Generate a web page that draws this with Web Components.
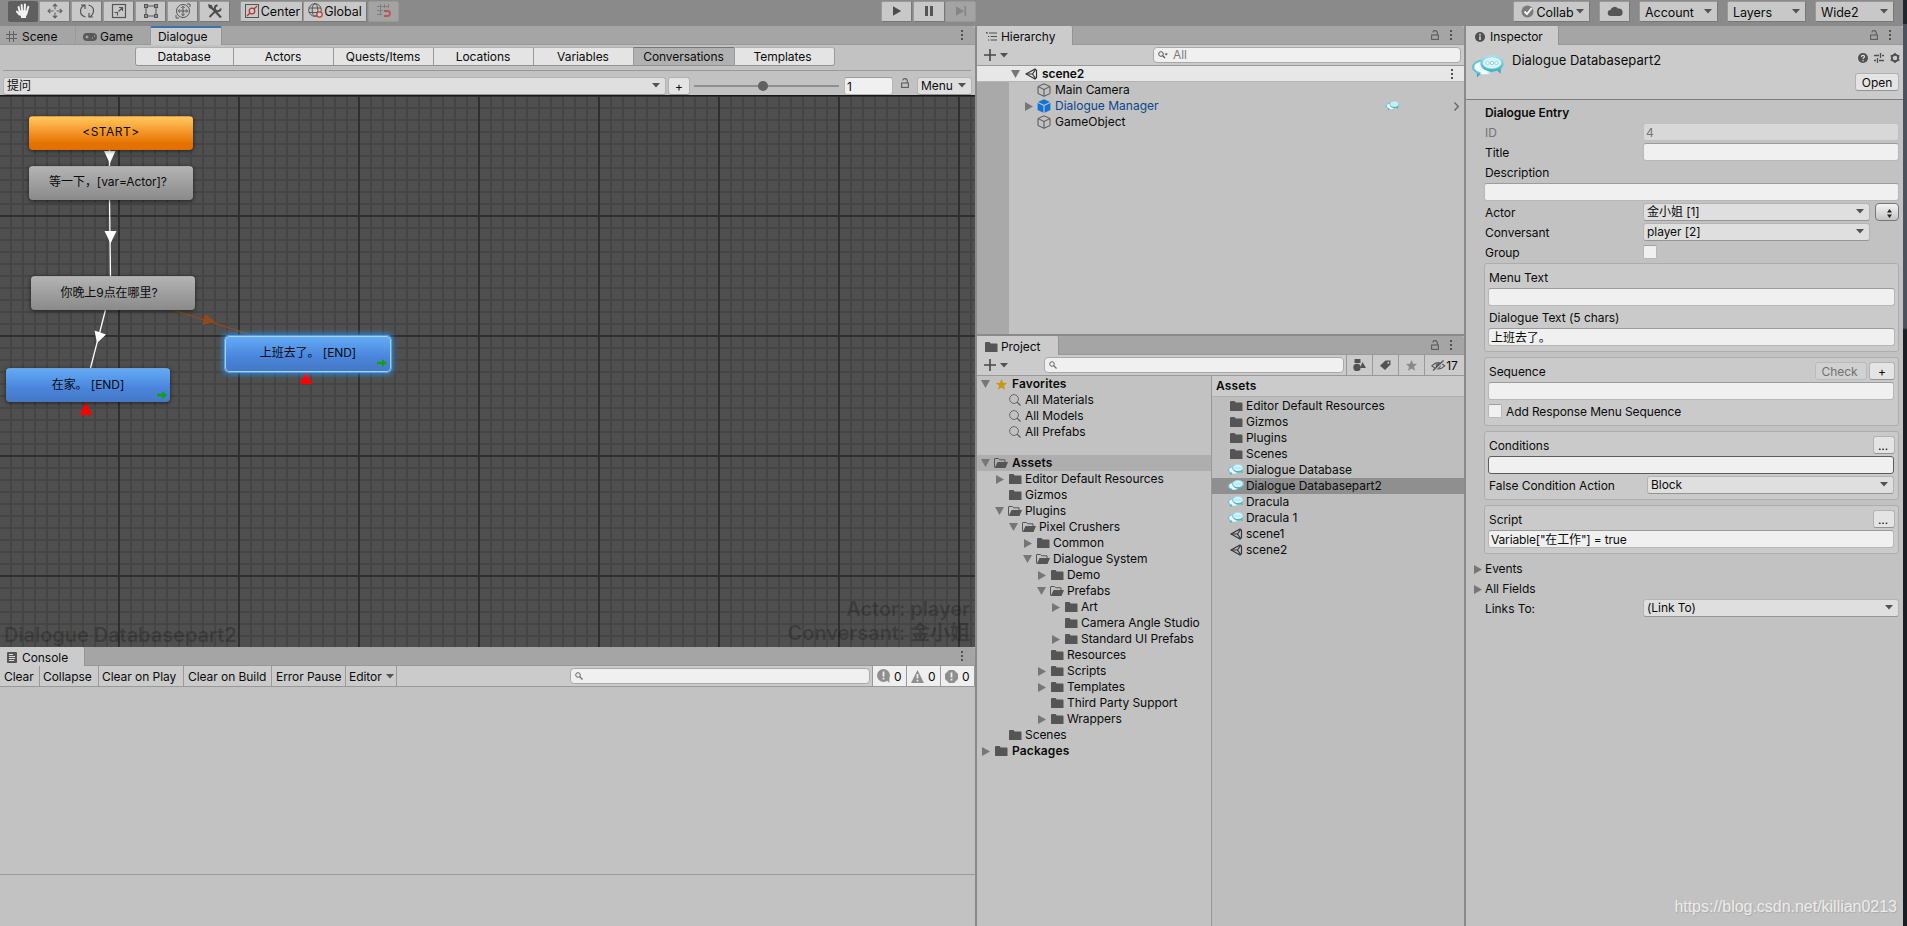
<!DOCTYPE html>
<html lang="zh">
<head>
<meta charset="utf-8">
<title>Unity Editor</title>
<style>
html,body{margin:0;height:100%}
body{font:12px/16px Inter,"Noto Sans CJK SC",sans-serif;color:#0b0b0b;background:#8a8a8a;overflow:hidden;letter-spacing:-.06px}
</style>
</head>
<body>
<editor-app></editor-app>
<script>
const define = (name, css, html) => {
  const t = document.createElement('template');
  customElements.define(name, class extends HTMLElement {
    constructor() {
      super();
      this.attachShadow({mode: 'open'});
    }
    connectedCallback() {
      if (this.shadowRoot.childNodes.length) return;
      t.innerHTML = `<style>*{box-sizing:border-box}:host{display:block;box-sizing:border-box;white-space:nowrap}${css}</style>` +
        (typeof html === 'function' ? html(this) : html);
      this.shadowRoot.append(t.content.cloneNode(true));
    }
  });
};

/* ---------- icons ---------- */
const chat = (id) => `<defs><linearGradient id="${id}" x1="0" y1="0" x2="0" y2="1"><stop offset="0" stop-color="#a6e6f0"/><stop offset="1" stop-color="#3fb0c3"/></linearGradient></defs>
<path d="M4.500 15 5 22.500 9.500 18zM24 14l4.500 5 .5-7z" fill="#3cabbf"/>
<ellipse cx="11.500" cy="12" rx="11.500" ry="7.500" fill="#62c5d5"/><ellipse cx="11.500" cy="12" rx="9.300" ry="5.500" fill="#f4fdfe"/>
<ellipse cx="20" cy="8.500" rx="11.700" ry="8.300" fill="url(#${id})"/><ellipse cx="20" cy="8" rx="9.300" ry="5.800" fill="#d9f4f8"/>
<path d="M9 13q3.500 5 10.500 4.500-5 3-11 1.500z" fill="#f4fdfe"/>
<g fill="#fff" stroke="#86d0dc" stroke-width=".9"><circle cx="15.500" cy="8" r="1.700"/><circle cx="20" cy="8" r="1.700"/><circle cx="24.500" cy="8" r="1.700"/></g>`;
const ICONS = {
  hand: [16,16,'<g stroke="#f2f2f2" stroke-width="2" stroke-linecap="round" fill="none"><path d="M4.6 8.6 3.6 4M7 7.5 6.6 2M9.6 7.5 10 1.6M12 8.5l1.3-4.7M4.5 11.5 1.9 8.6"/></g><path d="M3.8 8Q8 6.5 12.9 8q.1 3.5-1.9 5.5V15H6v-1.5Q3.8 11.8 3.8 8z" fill="#f2f2f2"/>'],
  move: [16,16,'<g fill="none" stroke="#606060" stroke-width="1.1"><path d="M8 1v5.500M8 9.500v5.500M1 8h5.500M9.500 8H15M5.800 3.300 8 1l2.200 2.300M5.800 12.700 8 15l2.200-2.300M3.300 5.800 1 8l2.300 2.200M12.700 5.800 15 8l-2.300 2.200"/></g>'],
  rotate: [16,16,'<g fill="none" stroke="#555" stroke-width="1.200"><path d="M6.500 14Q1.200 12.500 1.500 8 1.700 3.900 5.500 2.200M2 2h4v4M9.500 2q5.300 1.500 5 6-.2 4.100-4 5.800M14 14h-4v-4"/></g>'],
  scale: [16,16,'<g fill="none" stroke="#555" stroke-width="1.200"><rect x="1.500" y="1.500" width="13" height="13"/><path d="M8 4.500h3.500V8M11.500 4.500 7.500 8.500M3.500 9.500h3v3"/></g>'],
  rect: [16,16,'<g fill="#555"><path d="M3 3h10v10H3z" fill="none" stroke="#555"/><path d="M1 1h4v4H1zM11 1h4v4h-4zM1 11h4v4H1zM11 11h4v4h-4z"/></g><path d="M2.300 2.300h1.500v1.500H2.300zM12.300 2.300h1.500v1.500h-1.500zM2.300 12.300h1.500v1.500H2.300zM12.300 12.300h1.500v1.500h-1.500z" fill="#c8c8c8"/>'],
  multi: [16,16,'<g fill="none" stroke="#555"><circle cx="8" cy="8" r="6.500"/><path d="M8 3.500v9M3.500 8h9M6.300 5 8 3.300 9.700 5M6.300 11 8 12.700 9.700 11M5 6.300 3.300 8 5 9.700M11 6.300 12.700 8 11 9.700M12 1h3v3M4 15H1v-3" /></g>'],
  tools: [16,16,'<g fill="none" stroke="#4c4c4c" stroke-width="2.200"><path d="M5 5l9 9.500" /><path d="M2.500 14 9 7.500M13.800 5.500a3 3 0 1 1-3.300-3.300" stroke-width="1.900"/></g><path d="M1 1l4 1.200.9 3.100L4.500 6.300 1.800 4.800z" fill="#4c4c4c"/>'],
  center: [14,14,'<rect x=".5" y=".5" width="13" height="13" fill="none" stroke="#555"/><g stroke="#b23232" fill="none" stroke-width="1.200"><circle cx="7" cy="7" r="2.800"/><path d="M9 5l3-3M5 9l-3 3"/></g>'],
  globe: [16,16,'<g fill="none" stroke="#555"><circle cx="7" cy="7" r="6.300"/><ellipse cx="7" cy="7" rx="2.800" ry="6.300"/><path d="M1 5h12M1 9.500h9"/></g><circle cx="11.500" cy="11.500" r="2.700" fill="#d8d0d0" stroke="#c33" stroke-width="1.200"/>'],
  snap: [16,16,'<path d="M4.500 1v11M8.500 1v4M12.500 1v4M1 3.500h12M1 7.500h6M1 11.500h5" stroke="#808080" fill="none"/><path d="M8 8h3.500a2.500 2.500 0 0 1 0 5H8" fill="none" stroke="#bb5555" stroke-width="1.800"/>'],
  play: [16,16,'<path d="M4 3.200v9.600L12.200 8z" fill="#4c4c4c"/>'],
  pause: [16,16,'<path d="M4 3h3v10H4zM9 3h3v10H9z" fill="#555"/>'],
  step: [16,16,'<path d="M3 3.200v9.600L11 8zM11.500 3.200h1.600v9.600h-1.600z" fill="#858585"/>'],
  check: [13,13,'<circle cx="6.500" cy="6.500" r="6" fill="#7b7b7b"/><path d="M3.500 6.500 6 9l4.800-6" stroke="#f5f5f5" stroke-width="2" fill="none"/>'],
  cloud: [16,12,'<path d="M4 11a3 3 0 0 1-.5-6A4.300 4.300 0 0 1 11 3.500 3.700 3.700 0 0 1 12.500 11z" fill="#555"/>'],
  down: [8,5,'<path d="M0 0h8L4 4.600z" fill="#525252"/>'],
  foldd: [9,8,'<path d="M0 0h9L4.500 8z" fill="#767676"/>'],
  foldr: [8,9,'<path d="M0 0v9l8-4.500z" fill="#767676"/>'],
  grid: [11,11,'<path d="M3.500 0v11M7.500 0v11M0 3.500h11M0 7.500h11" stroke="#606060" fill="none"/>'],
  pad: [14,8,'<rect width="14" height="8" rx="4" fill="#595959"/><path d="M2.500 4h3M4 2.500v3M9 5h1M11 3h1" stroke="#bbb" fill="none"/>'],
  list: [11,9,'<path d="M3 1h8M4.500 4.500H11M4.500 8H11" stroke="#505050" stroke-width="1.100"/><path d="M0 .5h1.500M2 4.500h1.200M2 8h1.200M1 1v1" stroke="#505050"/>'],
  lock: [8,10,'<rect x=".6" y="5" width="6.800" height="4.400" fill="none" stroke="#5c5c5c" stroke-width="1.100"/><path d="M6.300 5V2.600Q6 .6 4 .6T1.800 2.400" fill="none" stroke="#5c5c5c" stroke-width="1.100"/>'],
  dots: [2,10,'<path d="M0 0h2v2H0zM0 4h2v2H0zM0 8h2v2H0z" fill="#525252"/>'],
  plus: [12,12,'<path d="M6 0v12M0 6h12" stroke="#484848" stroke-width="1.600"/>'],
  find: [8,8,'<circle cx="3" cy="3" r="2.300" fill="none" stroke="#666"/><path d="M4.700 4.700 7.500 7.500" stroke="#666" stroke-width="1.200"/>'],
  finda: [10,8,'<circle cx="3" cy="3" r="2.300" fill="none" stroke="#555"/><path d="M4.700 4.700 7 7" stroke="#555" stroke-width="1.300"/><path d="M6.500 2.500H10L8.200 4.500z" fill="#555"/>'],
  mag: [12,12,'<circle cx="5" cy="5" r="4.400" fill="none" stroke="#666"/><path d="M8.300 8.300 11.500 11.500" stroke="#666" stroke-width="1.400"/>'],
  scene: [13,12,'<g fill="none" stroke="#333" stroke-width="1.200"><path d="M1 6 10 .9l1.500 1.600v7L10 11.100z"/><path d="M1 6h6.500M7.500 6l3-4.500M7.500 6l3 4.500"/></g>'],
  cube: [14,14,'<g fill="none" stroke="#555" stroke-width="1"><path d="M7 .8 13 3.500v7L7 13.300 1 10.500v-7zM1 3.500l6 3 6-3M7 6.500v6.800"/></g>'],
  prefab: [14,14,'<path d="M7 .3 13 3 7 5.700 1 3zM.6 4l5.800 2.700v7L.6 11zM13.400 4 7.600 6.700v7l5.800-2.700z" fill="#1173d8"/>'],
  chev: [5,9,'<path d="M.5.500 4.300 4.500.500 8.500" fill="none" stroke="#666" stroke-width="1.300"/>'],
  chat: [32,23,chat('g')],
  folder: [13,10,'<path d="M0 1Q0 0 1 0h3.500l1.300 1.500H11.500q1 0 1 1V10H0z" fill="#555"/>'],
  open: [14,10,'<path d="M.5 9.500V1Q.5.500 1 .500h3.500l1.200 1.300H11V4" fill="none" stroke="#555"/><path d="M3.500 4H14l-2.500 6H.8z" fill="#555"/>'],
  star: [11,11,'<path d="M5.500 0l1.600 3.800 3.900.3-3 2.600 1 4.100-3.500-2.200L2 10.800l1-4.100L0 4.100l3.900-.3z" fill="#c8980f"/>'],
  star2: [11,11,'<path d="M5.500 0l1.600 3.800 3.900.3-3 2.600 1 4.100-3.500-2.200L2 10.800l1-4.100L0 4.100l3.900-.3z" fill="#8a8a8a"/>'],
  shapes: [13,12,'<path d="M1.500 0h6v4h-6zM9.500 3l3.500 6H7z" fill="#525252"/><circle cx="4" cy="8.500" r="3.700" fill="#525252"/>'],
  tag: [11,10,'<path d="M5.500.500H10.500V4.500L5 10 0 5.800z" fill="#525252"/><circle cx="8.300" cy="2.700" r="1" fill="#ccc"/>'],
  eye: [15,11,'<path d="M.8 5.800Q7.300-.5 13.800 5.800 7.300 12 .8 5.800z" fill="none" stroke="#555" stroke-width="1.100"/><circle cx="7.300" cy="5.500" r="2.600" fill="#666"/><path d="M2.800 11 13.300 1" stroke="#cbcbcb" stroke-width="1.500"/><path d="M2 10.500 12.500.500" stroke="#555" stroke-width="1.300"/>'],
  lines: [10,11,'<rect width="10" height="11" rx="1" fill="#555"/><path d="M2 2.500h4M2 4.500h6M2 6.500h6M2 8.500h5" stroke="#ddd" fill="none"/>'],
  info: [10,10,'<circle cx="5" cy="5" r="5" fill="#505050"/><path d="M5 1.800v1.600M5 4.300V8" stroke="#ddd" stroke-width="1.500"/>'],
  log: [13,14,'<circle cx="6.500" cy="6.500" r="6.500" fill="#8f8f8f"/><path d="M8 9h4.300v5z" fill="#8f8f8f"/><path d="M6.500 2.500v5M6.500 8.700v1.800" stroke="#eee" stroke-width="1.800"/>'],
  warn: [13,13,'<path d="M6.500 0 13 13H0z" fill="#8f8f8f"/><path d="M6.500 4v4.500M6.500 9.800v1.700" stroke="#eee" stroke-width="1.700"/>'],
  err: [13,13,'<path d="M4 0h5l4 4v5l-4 4H4L0 9V4z" fill="#8f8f8f"/><path d="M6.500 2.500v5M6.500 8.700v1.800" stroke="#eee" stroke-width="1.800"/>'],
  help: [10,10,'<circle cx="5" cy="5" r="5" fill="#505050"/><path d="M3.400 3.900Q3.500 2.300 5 2.300T6.500 3.700Q6.400 4.600 5.400 5L5 6M5 7v1.200" fill="none" stroke="#e0e0e0" stroke-width="1.200"/>'],
  presets: [10,10,'<path d="M0 2.500h5M8 2.500h2M6.500 0v5M0 7.500h2M5 7.500h5M3.500 5v5" stroke="#505050" stroke-width="1.300"/>'],
  gear: [10,10,'<circle cx="5" cy="5" r="3.200" fill="none" stroke="#505050" stroke-width="1.900"/><path d="M5 0v1.500M5 8.500V10M.7 2.500 2 3.300M8 6.700l1.300.8M.7 7.500 2 6.700M8 3.300l1.300-.8" stroke="#505050" stroke-width="1.600"/>'],
  updown: [5,9,'<path d="M0 3.500h5L2.500 0zM0 5.500h5L2.500 9z" fill="#222"/>'],
  arrow: [10,8,'<path d="M0 2.800h5V0l5 4-5 4V5.200H0z" fill="#10a010"/>'],
};
define('ui-icon', ':host{flex:none;display:block}svg{display:block}', el => {
  const [w, h, body] = ICONS[el.getAttribute('name')];
  const s = +(el.getAttribute('scale') || 1);
  return `<svg width="${w*s}" height="${h*s}" viewBox="0 0 ${w} ${h}">${body}</svg>`;
});

/* ---------- basic controls ---------- */
define('ui-button', `:host{height:17px;display:flex;align-items:center;justify-content:center;background:#e4e4e4;border:1px solid #b2b2b2;border-bottom-color:#949494;border-radius:3px;line-height:15px}
:host([off]){background:#d1d1d1;border-color:#bababa;color:#707070}
:host([aqua]){background:linear-gradient(#f4f4f4,#c4c4c4);border-color:#777;border-radius:4px}`, '<slot></slot>');
define('ui-popup', `:host{height:18px;display:flex;align-items:center;justify-content:space-between;background:#dfdfdf;border:1px solid #b4b4b4;border-bottom-color:#959595;border-radius:3px;padding:0 5px 1px 3px;line-height:15px}`,
 '<span><slot></slot></span><ui-icon name="down"></ui-icon>');
define('ui-field', `:host{height:18px;background:#f0f0f0;border:1px solid #b7b7b7;border-top-color:#9c9c9c;border-radius:3px;padding-left:2px;line-height:17px}
:host([off]){background:#d8d8d8;border-color:#c0c0c0;color:#757575}:host([focus]){border-color:#5c5c5c}`, '<slot></slot>');
define('ui-check', `:host{flex:none;width:14px;height:14px;background:#f0f0f0;border:1px solid #b7b7b7;border-top-color:#a0a0a0;border-radius:2px}`, '');
define('ui-search', `:host{height:16px;display:flex;align-items:center;background:#f0f0f0;border:1px solid #a9a9a9;border-radius:4px;padding-left:4px;gap:5px;color:#7b7b7b}`,
 el => `<ui-icon name="${el.getAttribute('icon') || 'find'}"></ui-icon><slot></slot>`);

/* ---------- top toolbar ---------- */
define('tool-button', `:host{height:21px;display:flex;align-items:center;justify-content:center;gap:2px;background:#c8c8c8;border:1px solid #777;border-top-color:#999;border-left-color:#999;padding-bottom:1px;border-radius:2px}
:host([on]){background:#5f5f5f;border-color:#5f5f5f}:host([off]){background:#a3a3a3;border-color:#999}
:host([menu]){justify-content:space-between;padding:0 5px 0 5px}`, '<slot></slot>');
define('editor-toolbar', `:host{display:flex;height:26px;background:#8a8a8a;padding-top:1px;font-size:12.500px;align-items:flex-start}
tool-button{width:31px;margin-right:1px}.c{margin-left:10px;width:63px;margin-right:0;padding-left:2px}.g{width:64px;margin-right:1px}.s{width:31px;margin-right:482px}
.tx{line-height:19px;padding-top:1px}`,
`<tool-button on style="margin-left:8px;width:30px"><ui-icon name="hand"></ui-icon></tool-button><tool-button><ui-icon name="move"></ui-icon></tool-button><tool-button><ui-icon name="rotate"></ui-icon></tool-button><tool-button><ui-icon name="scale"></ui-icon></tool-button><tool-button><ui-icon name="rect"></ui-icon></tool-button><tool-button><ui-icon name="multi"></ui-icon></tool-button><tool-button style="margin:0"><ui-icon name="tools"></ui-icon></tool-button>
<tool-button class="c"><ui-icon name="center"></ui-icon><span class="tx">Center</span></tool-button><tool-button class="g"><ui-icon name="globe"></ui-icon><span class="tx" style="margin-left:-2px">Global</span></tool-button><tool-button class="s" off><ui-icon name="snap"></ui-icon></tool-button>
<tool-button style="margin-right:1px"><ui-icon name="play"></ui-icon></tool-button><tool-button style="width:32px;margin-right:0"><ui-icon name="pause"></ui-icon></tool-button><tool-button off style="margin-right:537px"><ui-icon name="step"></ui-icon></tool-button>
<tool-button menu style="width:77px;margin-right:9px;padding-left:7px"><ui-icon name="check"></ui-icon><span class="tx">Collab</span><ui-icon name="down"></ui-icon></tool-button><tool-button style="margin-right:9px"><ui-icon name="cloud"></ui-icon></tool-button>
<tool-button menu style="width:79px;margin-right:9px"><span class="tx">Account</span><ui-icon name="down"></ui-icon></tool-button><tool-button menu style="width:79px;margin-right:9px"><span class="tx">Layers</span><ui-icon name="down"></ui-icon></tool-button><tool-button menu style="width:79px"><span class="tx">Wide2</span><ui-icon name="down"></ui-icon></tool-button>`);

/* ---------- dock panel ---------- */
define('dock-tab', `:host{height:19px;display:flex;align-items:center;padding-top:2px;gap:5px;border-right:1px solid #9a9a9a}
:host([on]){background:#cbcbcb;height:19px;border-right:1px solid #949494;border-radius:0 2px 0 0}:host([focus]){border-top:2px solid #3a72b0;padding-top:0}`, '<slot></slot>');
define('dock-panel', `:host{display:flex;flex-direction:column;min-height:0;min-width:0;background:#c2c2c2;overflow:hidden}
.bar{flex:none;height:19px;background:#a5a5a5;display:flex;border-radius:0 3px 0 0;box-shadow:inset 0 -1px #999}
.sp{flex:1}.ic{display:flex;gap:11px;align-items:center;padding:0 12px 2px 0}`,
el => `<div class="bar"><slot name="tab"></slot><div class="sp"></div><div class="ic">${el.hasAttribute('lock') ? '<ui-icon name="lock"></ui-icon>' : ''}<ui-icon name="dots"></ui-icon></div></div><slot></slot>`);

/* ---------- dialogue graph ---------- */
define('graph-node', `:host{position:absolute;width:164px;height:34px;border-radius:4px;text-align:center;line-height:29px;border-top:1px solid #ffffff44;box-shadow:0 1px 4px #0009;background:linear-gradient(#b3b3b3,#8a8a8a)}
:host([kind=start]){background:linear-gradient(#ffc85c,#f5962a 45%,#e57300 80%,#e36e00);letter-spacing:.5px}
:host(:not([kind])){padding-right:6px}
:host([kind=npc]){background:linear-gradient(#62aaf5,#4a84dc 60%,#4479c4);line-height:31px}
:host([sel]){box-shadow:0 0 0 1px #4fa0e8,0 0 5px 3px #3391e4aa;border:1px solid #9fd2ff;width:166px;height:36px}
ui-icon{position:absolute;right:3px;bottom:3px}:host([sel]) ui-icon{right:3px;bottom:4px}`,
el => '<slot></slot>' + (el.getAttribute('kind') === 'npc' ? '<ui-icon name="arrow"></ui-icon>' : ''));
define('dialogue-graph', `:host{position:relative;flex:1;overflow:hidden;background-color:#4f4f4f;border-top:1px solid #191919;
background-image:linear-gradient(90deg,#0000 118px,#2d2d2d 118px,#303030 120px),linear-gradient(#0000 118px,#2d2d2d 118px,#303030 120px),linear-gradient(90deg,#0000 10px,#454545 10px),linear-gradient(#0000 10px,#454545 10px);
background-size:120px 120px,120px 120px,12px 12px,12px 12px;background-position:0 0,0 1px,0 0,0 1px}
svg{position:absolute;left:0;top:0}
.wm{position:absolute;font:600 20px/24px Inter,"Noto Sans CJK SC",sans-serif;color:#0000003b;letter-spacing:-.05px}`,
`<svg width="975" height="552" viewBox="0 96 975 552"><g stroke="#fff" stroke-width="1.300" fill="#fff"><path d="M109.500 148v20M109.500 198l1 80M106.500 306 90 370"/><path stroke="none" d="M104 151h11.500l-5.700 12.500zM104.500 231h12l-6 12.500zM94.500 330.500l11.500 4-9 8.500z"/></g>
<path d="M172 309.500 258 337" stroke="#94491c" stroke-width="1.300"/><path d="M205 314l10.500 8-13.500 3z" fill="#94491c"/>
<path d="M86 402l6.500 13h-13zM306 371.500l6.500 12.500h-13z" fill="#f00"/></svg>
<graph-node kind="start" style="left:29px;top:20px">&lt;START&gt;</graph-node>
<graph-node style="left:29px;top:70px">等一下，[var=Actor]?</graph-node>
<graph-node style="left:31px;top:180px;line-height:31px;padding-right:8px">你晚上9点在哪里?</graph-node>
<graph-node kind="npc" style="left:6px;top:272px">在家。 [END]</graph-node>
<graph-node kind="npc" sel style="left:225px;top:240px">上班去了。 [END]</graph-node>
<div class="wm" style="left:4px;bottom:0">Dialogue Databasepart2</div>
<div class="wm" style="right:5px;bottom:2px;text-align:right">Actor: player<br>Conversant: 金小姐</div>`);
define('dialogue-window', `:host{flex:1;display:flex;flex-direction:column;min-height:0}
.tabs{flex:none;display:flex;height:19px;margin:2px 0 0 135px;width:710px;line-height:17px}.tabs div{width:100px;text-align:center;background:#e4e4e4;border:1px solid #b0b0b0;border-width:1px 0 1px 1px;border-left-color:#999;border-bottom-color:#929292;padding-right:1px}
.tabs .on{background:#b1b1b1;border-top-color:#777;width:101px}.tabs div:first-child{border-radius:3px 0 0 3px;width:98px}.tabs div:last-child{border-right:1px solid #999;border-radius:0 3px 3px 0;width:101px;padding-right:4px}
hr{flex:none;width:968px;margin:4px 0 0 3px;border:0;border-top:1px solid #999;height:1px}
.row{flex:none;display:flex;height:24px;padding:6px 0 0 3px;align-items:flex-start}
.sl{width:145px;height:18px;margin:0 5px 0 4px;display:flex;align-items:center;background:linear-gradient(#8f8f8f,#8f8f8f) center/100% 2px no-repeat}.sl i{width:10px;height:10px;border-radius:5px;background:#606060;margin-left:64px}`,
`<div class="tabs"><div>Database</div><div>Actors</div><div>Quests/Items</div><div>Locations</div><div>Variables</div><div class="on">Conversations</div><div>Templates</div></div><hr>
<div class="row"><ui-popup style="width:663px">提问</ui-popup><ui-button style="width:22px;margin-left:2px;height:18px">+</ui-button><div class="sl"><i></i></div><ui-field style="width:49px">1</ui-field><ui-icon name="lock" style="margin:1px 8px 0"></ui-icon><ui-popup style="width:55px">Menu</ui-popup></div>
<dialogue-graph></dialogue-graph>`);

/* ---------- console ---------- */
define('console-window', `:host{flex:1;display:flex;flex-direction:column}
.bar{flex:none;display:flex;height:21px;background:#cbcbcb;border-bottom:1px solid #999;line-height:20px}.bar>div{border-right:1px solid #999;height:20px;padding:1px 0 0 4px;display:flex;align-items:center;gap:4px}
.n{background:#efefef;width:34px}
.log{height:188px;border-bottom:1px solid #999}ui-search{margin:2px 2px 0 auto;width:300px}.n ui-icon{margin-top:-1px}`,
`<div class="bar"><div style="width:40px">Clear</div><div style="width:59px;padding-left:3px">Collapse</div><div style="width:85px;padding-left:3px">Clear on Play</div><div style="width:88px">Clear on Build</div><div style="width:74px">Error Pause</div><div style="width:51px;padding-left:3px">Editor <ui-icon name="down"></ui-icon></div><ui-search></ui-search>
<div class="n" style="border-left:1px solid #999;width:35px"><ui-icon name="log"></ui-icon>0</div><div class="n"><ui-icon name="warn"></ui-icon>0</div><div class="n"><ui-icon name="err"></ui-icon>0</div></div><div class="log"></div>`);

/* ---------- hierarchy / project ---------- */
define('tree-row', `:host{display:flex;height:16px;align-items:center;flex:none}
.f{width:14px;display:flex;justify-content:center;flex:none}.i{width:16px;display:flex;justify-content:center;flex:none;margin-right:2px}`,
el => {
  const a = n => el.getAttribute(n), f = a('fold');
  return `<div class="f" style="margin-left:${+(a('depth') || 0) * 14 + +(a('x') || 0)}px">${f ? `<ui-icon name="fold${f}" ${f === 'd' ? 'style="margin-right:1px"' : ''}></ui-icon>` : ''}</div><div class="i"><ui-icon name="${a('icon')}" scale="${a('icon') === 'chat' ? .5 : 1}"></ui-icon></div><slot></slot>`;
});
define('hierarchy-window', `:host{flex:1;display:flex;flex-direction:column;margin-top:0}
.bar{flex:none;display:flex;height:21px;background:#cbcbcb;border-bottom:1px solid #999;padding:2px 3px 0 7px}.bar ui-search{width:308px;margin-left:auto}
.scene{display:flex;background:#e7e7e7;height:16px;border-bottom:1px solid #b5b5b5;font-weight:600;align-items:center}
.body{flex:1;display:flex}.gut{width:32px;background:#a9a9a9}.tree{flex:1}`,
`<div class="bar"><ui-icon name="plus" style="margin-top:2px"></ui-icon><ui-icon name="down" style="margin:6px 0 0 4px"></ui-icon><ui-search icon="finda">All</ui-search></div>
<div class="scene"><tree-row x="32" fold="d" icon="scene" style="flex:1"><span style="margin-left:1px">scene2</span></tree-row><ui-icon name="dots" style="margin-right:11px"></ui-icon></div>
<div class="body"><div class="gut"></div><div class="tree"><tree-row x="13" icon="cube"><span style="margin-left:1px">Main Camera</span></tree-row><tree-row x="13" fold="r" icon="prefab" style="color:#0b468c"><span style="margin-left:1px;letter-spacing:0">Dialogue Manager</span><ui-icon name="chat" scale=".42" style="margin-left:auto"></ui-icon><ui-icon name="chev" style="margin:0 5px 0 55px"></ui-icon></tree-row><tree-row x="13" icon="cube"><span style="margin-left:1px;letter-spacing:0">GameObject</span></tree-row></div></div>`);
const TREE = [[0,'r','folder','Editor Default Resources'],[0,'','folder','Gizmos'],[0,'d','open','Plugins'],[1,'d','open','Pixel Crushers'],[2,'r','folder','Common'],[2,'d','open','Dialogue System'],[3,'r','folder','Demo'],[3,'d','open','Prefabs'],[4,'r','folder','Art'],[4,'','folder','Camera Angle Studio'],[4,'r','folder','Standard UI Prefabs'],[3,'','folder','Resources'],[3,'r','folder','Scripts'],[3,'r','folder','Templates'],[3,'','folder','Third Party Support'],[3,'r','folder','Wrappers'],[0,'','folder','Scenes']];
const ASSETS = [['folder','Editor Default Resources'],['folder','Gizmos'],['folder','Plugins'],['folder','Scenes'],['chat','Dialogue Database'],['chat','Dialogue Databasepart2'],['chat','Dracula'],['chat','Dracula 1'],['scene','scene1'],['scene','scene2']];
define('project-window', `:host{flex:1;display:flex;flex-direction:column}
.bar{flex:none;display:flex;height:21px;background:#cbcbcb;border-bottom:1px solid #999;padding-left:7px}.bar ui-search{width:300px;margin:2px auto 0 36px}
.b{width:26px;height:20px;border-left:1px solid #999;display:flex;align-items:center;justify-content:center}.body{flex:1;display:flex}
.l{width:235px;border-right:1px solid #999}.r{flex:1;background:#bebebe}.h{height:21px;background:#cbcbcb;border-bottom:1px solid #b0b0b0;padding-left:4px;line-height:20px;margin-bottom:1px}
b{font-weight:600;margin-left:1px;letter-spacing:.12px}.h b{margin:0}`,
`<div class="bar"><ui-icon name="plus" style="margin-top:4px"></ui-icon><ui-icon name="down" style="margin:8px 0 0 4px"></ui-icon><ui-search></ui-search><div class="b"><ui-icon name="shapes"></ui-icon></div><div class="b"><ui-icon name="tag"></ui-icon></div><div class="b"><ui-icon name="star2"></ui-icon></div><div class="b" style="width:40px"><ui-icon name="eye"></ui-icon><span style="padding-top:1px">17</span></div></div>
<div class="body"><div class="l"><tree-row x="2" fold="d" icon="star"><b>Favorites</b></tree-row>${['Materials','Models','Prefabs'].map(t => `<tree-row x="16" icon="mag">All ${t}</tree-row>`).join('')}
<tree-row x="2" fold="d" icon="open" style="margin-top:15px;background:#aeaeae"><b>Assets</b></tree-row>${TREE.map(([d,f,i,t]) => `<tree-row x="16" depth="${d}" fold="${f}" icon="${i}">${t}</tree-row>`).join('')}<tree-row x="2" fold="r" icon="folder"><b>Packages</b></tree-row></div>
<div class="r"><div class="h"><b>Assets</b></div>${ASSETS.map(([i,t], n) => `<tree-row x="2" icon="${i}" ${n === 5 ? 'style="background:#8f8f8f"' : ''}>${t}</tree-row>`).join('')}</div></div>`);

/* ---------- inspector ---------- */
define('prop-row', `:host{display:flex;height:20px;line-height:20px;align-items:flex-start}.l{width:159px;flex:none;padding-left:1px}:host([wide]) .l{width:auto}:host([off]){color:#747474}:host([right]) .l{flex:1}`,
 el => `<div class="l">${el.getAttribute('label') || ''}</div><slot></slot>`);
define('prop-box', `:host{background:#cacaca;border:1px solid #adadad;border-radius:3px;padding:4px 3px 3px 3px;margin-bottom:5px}`, '<slot></slot>');
define('inspector-window', `:host{flex:1;display:block}
.head{height:55px;background:#cbcbcb;border-bottom:1px solid #7c7c7c;display:flex;padding:0 4px 0 6px}
.body{padding:3px 4px 0 18px}.t{font-size:13px;letter-spacing:.03px;line-height:18px;margin:6px 0 0 8px;flex:1}.ic{display:flex;justify-content:flex-end;gap:6px;margin:8px -1px 10px 0}
.grow{flex:1}ui-button.d{width:22px;height:18px}.fold{margin-left:-10px;display:flex;height:20px;align-items:center;gap:3px}`,
`<div class="head"><ui-icon name="chat" style="margin-top:10px"></ui-icon><div class="t">Dialogue Databasepart2</div><div><div class="ic"><ui-icon name="help"></ui-icon><ui-icon name="presets"></ui-icon><ui-icon name="gear"></ui-icon></div><ui-button style="width:44px;height:18px">Open</ui-button></div></div>
<div class="body"><prop-row label="<b style='font-weight:600'>Dialogue Entry</b>"></prop-row>
<prop-row label="ID" off><ui-field off class="grow">4</ui-field></prop-row><prop-row label="Title"><ui-field class="grow"></ui-field></prop-row><prop-row label="Description"></prop-row>
<prop-row wide><ui-field class="grow" style="margin-left:-1px"></ui-field></prop-row>
<prop-row label="Actor"><ui-popup class="grow">金小姐 [1]</ui-popup><ui-button aqua style="width:24px;height:18px;margin-left:5px;padding:3px 0 0 4px"><ui-icon name="updown"></ui-icon></ui-button></prop-row>
<prop-row label="Conversant"><ui-popup class="grow" style="margin-right:29px">player [2]</ui-popup></prop-row>
<prop-row label="Group"><ui-check style="margin-top:2px"></ui-check></prop-row>
<prop-box><prop-row label="Menu Text"></prop-row><prop-row wide><ui-field class="grow" style="margin-left:-1px"></ui-field></prop-row><prop-row label="Dialogue Text (5 chars)"></prop-row><prop-row wide><ui-field class="grow" style="margin-left:-1px">上班去了。</ui-field></prop-row></prop-box>
<prop-box><prop-row label="Sequence" right><ui-button off style="width:52px;height:18px;padding-right:3px">Check</ui-button><ui-button style="width:26px;height:18px;margin-left:2px">+</ui-button></prop-row><prop-row wide><ui-field class="grow" style="margin:0 1px 0 -1px"></ui-field></prop-row><prop-row wide><ui-check style="margin:2px 4px 0 -1px"></ui-check><span style="letter-spacing:-.11px">Add Response Menu Sequence</span></prop-row></prop-box>
<prop-box><prop-row label="Conditions" right><ui-button class="d" style="padding-right:2px">...</ui-button></prop-row><prop-row wide><ui-field focus class="grow" style="margin:0 1px 0 -1px"></ui-field></prop-row><prop-row label="False Condition Action"><ui-popup class="grow" style="margin-right:1px">Block</ui-popup></prop-row></prop-box>
<prop-box><prop-row label="Script" right><ui-button class="d" style="padding-right:2px">...</ui-button></prop-row><prop-row wide><ui-field class="grow" style="margin:0 1px 0 -1px;letter-spacing:-.16px">Variable["在工作"] = true</ui-field></prop-row></prop-box>
<div class="fold"><ui-icon name="foldr"></ui-icon><span>Events</span></div><div class="fold"><ui-icon name="foldr"></ui-icon><span>All Fields</span></div>
<prop-row label="Links To:"><ui-popup class="grow">(Link To)</ui-popup></prop-row></div>`);

define('editor-app', `:host{display:grid;height:926px;width:1907px;grid-template-rows:26px 900px;grid-template-columns:1903px 4px;position:relative;overflow:hidden}
.main{display:grid;grid-template-columns:975px 487px 437px;column-gap:2px;min-height:0}.col{display:grid;row-gap:0;min-height:0}.mid{grid-template-rows:308px 590px;row-gap:2px}.left{grid-template-rows:621px 279px}
.edge{grid-row:1/3;grid-column:2;background:linear-gradient(#20262e 24px,#4c515d 24px,#4c515d 328px,#1b1f25 330px)}
.main{grid-row:2;grid-column:1}.mark{position:absolute;right:10px;bottom:9px;font:16px/20px "Liberation Sans",sans-serif;letter-spacing:-.02px;color:#ececec;text-shadow:1px 1px 1px #8886}`,
`<editor-toolbar></editor-toolbar><div class="main"><div class="col left">
<dock-panel><dock-tab slot="tab" style="width:76px;padding-left:6px"><ui-icon name="grid"></ui-icon>Scene</dock-tab><dock-tab slot="tab" style="width:75px;padding-left:7px;gap:3px"><ui-icon name="pad"></ui-icon>Game</dock-tab><dock-tab slot="tab" on focus style="width:71px;padding-left:7px">Dialogue</dock-tab><dialogue-window></dialogue-window></dock-panel>
<dock-panel><dock-tab slot="tab" on style="width:85px;padding-left:7px"><ui-icon name="lines"></ui-icon>Console</dock-tab><console-window></console-window></dock-panel></div>
<div class="col mid"><dock-panel lock><dock-tab slot="tab" on style="width:96px;padding-left:9px;gap:4px"><ui-icon name="list"></ui-icon>Hierarchy</dock-tab><hierarchy-window></hierarchy-window></dock-panel>
<dock-panel lock><dock-tab slot="tab" on style="width:82px;padding-left:8px;gap:3px"><ui-icon name="folder"></ui-icon>Project</dock-tab><project-window></project-window></dock-panel></div>
<dock-panel lock><dock-tab slot="tab" on style="width:93px;padding-left:9px"><ui-icon name="info"></ui-icon>Inspector</dock-tab><inspector-window></inspector-window></dock-panel></div>
<div class="edge"></div><div class="mark">https://blog.csdn.net/killian0213</div>`);
</script>
</body>
</html>
